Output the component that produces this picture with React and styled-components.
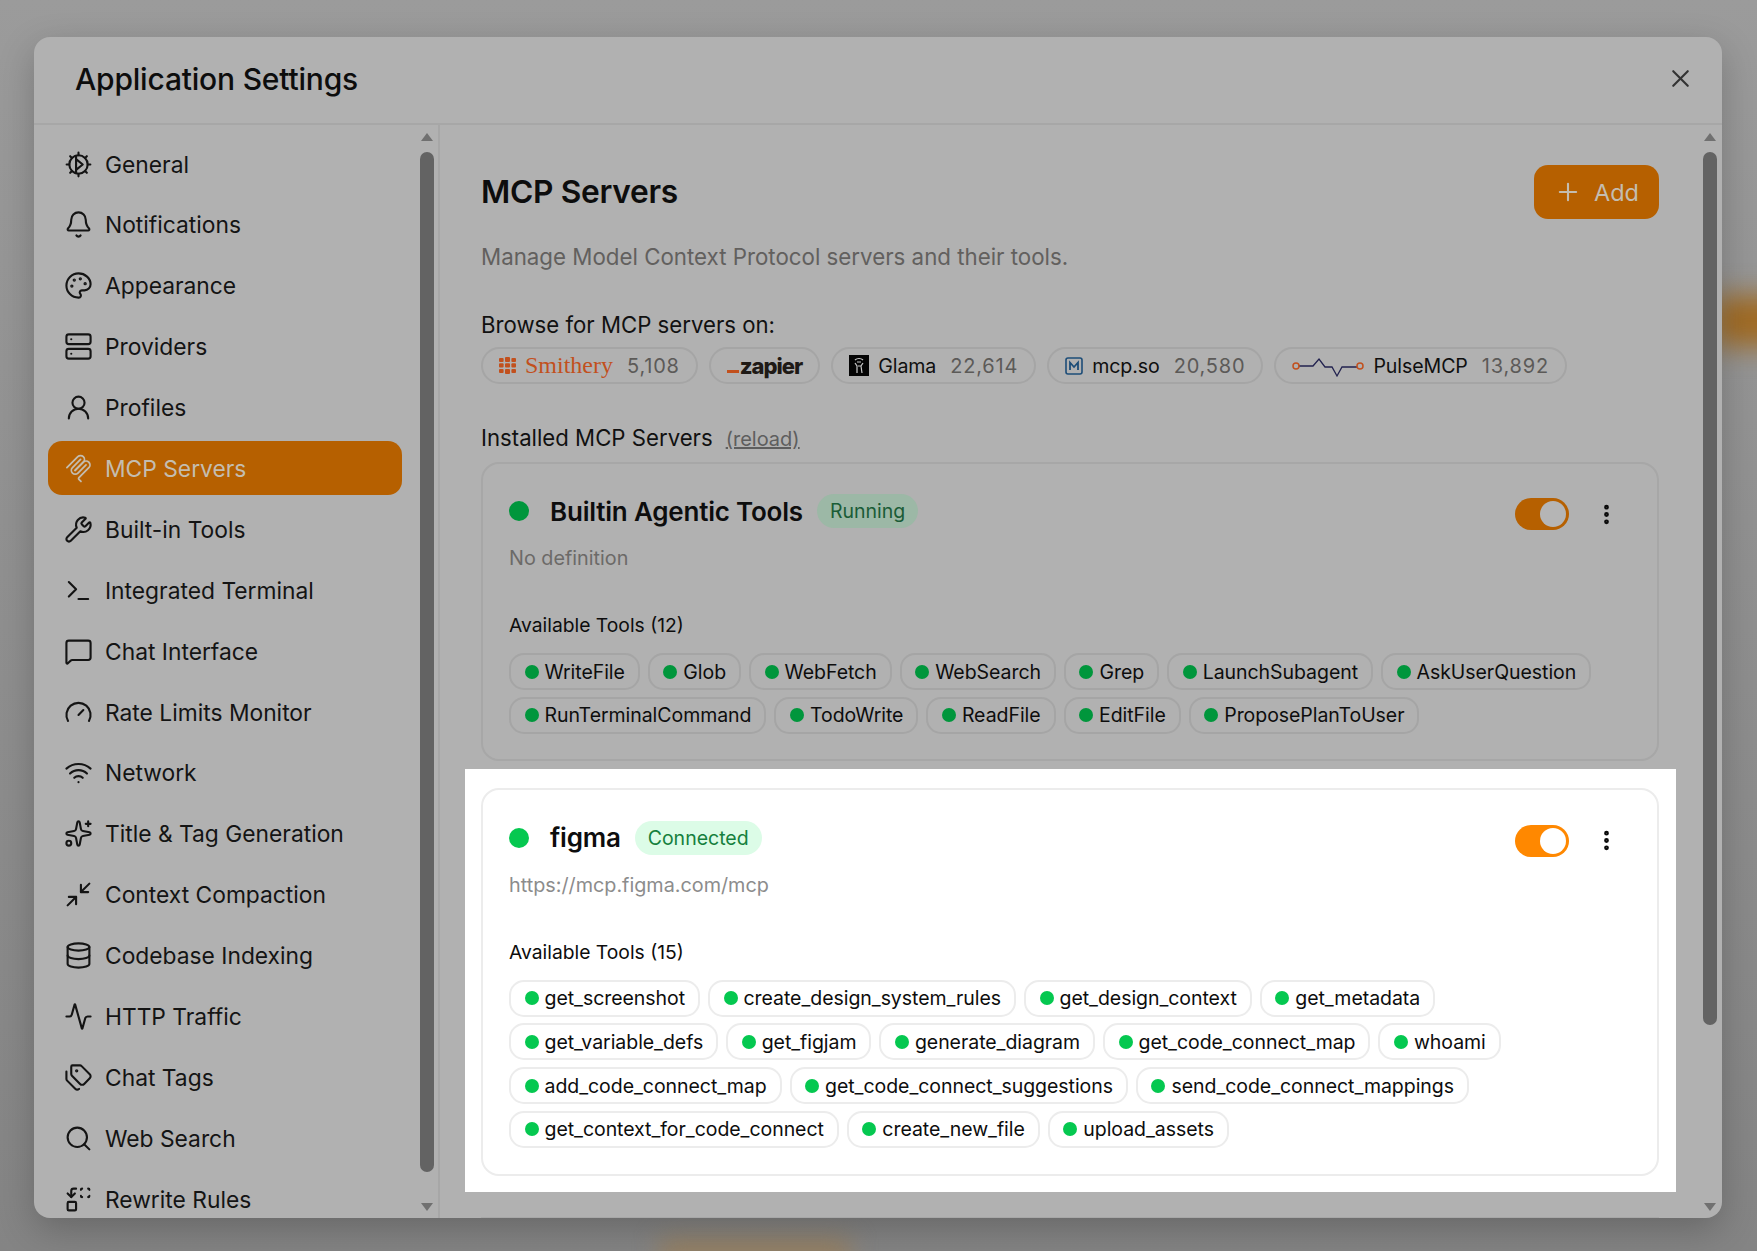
import React from 'react'
import styled, { createGlobalStyle } from 'styled-components'
import {
  Bell, Palette, Server, UserRound, Wrench, Terminal, MessageSquare, Gauge, Wifi,
  Sparkles, Minimize2, Database, Activity, Tags, Search, Replace, X, Plus, EllipsisVertical,
} from 'lucide-react'

const GlobalStyle = createGlobalStyle`
  html, body {
    margin: 0;
    padding: 0;
    background: #8f8f8f;
  }
  * {
    box-sizing: border-box;
  }
`

const GeneralIcon = ({ size }) => (
  <svg width={size} height={size} viewBox="0 0 24 24" fill="none" stroke="currentColor" strokeWidth="1.75" strokeLinecap="round" strokeLinejoin="round">
    <circle cx="12" cy="12" r="7.6" />
    <path d="M12 2.2v2.2M12 19.6v2.2M2.2 12h2.2M19.6 12h2.2M5.1 5.1l1.5 1.5M17.4 17.4l1.5 1.5M5.1 18.9l1.5-1.5M17.4 6.6l1.5-1.5" />
    <path d="M10 4.8v14.4M10 7.5l5.5 4.5L10 16.5" />
  </svg>
)

const McpIcon = ({ size }) => (
  <svg width={size} height={size} viewBox="0 0 180 180" fill="none" stroke="currentColor" strokeWidth="11" strokeLinecap="round">
    <path d="M18 84.85L85.88 16.97c9.37-9.37 24.57-9.37 33.94 0 9.37 9.37 9.37 24.57 0 33.94L68.56 102.18" />
    <path d="M69.27 101.47l50.55-50.56c9.37-9.37 24.57-9.37 33.94 0l.36.35c9.37 9.38 9.37 24.57 0 33.94L92.72 146.6c-3.12 3.12-3.12 8.19 0 11.31l12.61 12.61" />
    <path d="M102.85 33.94L52.65 84.15c-9.37 9.37-9.37 24.56 0 33.94 9.37 9.37 24.57 9.37 33.94 0l50.2-50.21" />
  </svg>
)

const navItems = [
  { label: 'General', icon: GeneralIcon },
  { label: 'Notifications', icon: Bell },
  { label: 'Appearance', icon: Palette },
  { label: 'Providers', icon: Server },
  { label: 'Profiles', icon: UserRound },
  { label: 'MCP Servers', icon: McpIcon, active: true },
  { label: 'Built-in Tools', icon: Wrench },
  { label: 'Integrated Terminal', icon: Terminal },
  { label: 'Chat Interface', icon: MessageSquare },
  { label: 'Rate Limits Monitor', icon: Gauge },
  { label: 'Network', icon: Wifi },
  { label: 'Title & Tag Generation', icon: Sparkles },
  { label: 'Context Compaction', icon: Minimize2 },
  { label: 'Codebase Indexing', icon: Database },
  { label: 'HTTP Traffic', icon: Activity },
  { label: 'Chat Tags', icon: Tags },
  { label: 'Web Search', icon: Search },
  { label: 'Rewrite Rules', icon: Replace },
]

const builtinTools = [
  'WriteFile', 'Glob', 'WebFetch', 'WebSearch', 'Grep', 'LaunchSubagent', 'AskUserQuestion',
  'RunTerminalCommand', 'TodoWrite', 'ReadFile', 'EditFile', 'ProposePlanToUser',
]

const figmaTools = [
  'get_screenshot', 'create_design_system_rules', 'get_design_context', 'get_metadata',
  'get_variable_defs', 'get_figjam', 'generate_diagram', 'get_code_connect_map', 'whoami',
  'add_code_connect_map', 'get_code_connect_suggestions', 'send_code_connect_mappings',
  'get_context_for_code_connect', 'create_new_file', 'upload_assets',
]

function ServerCard({ lit, name, badge, url, tools }) {
  return (
    <Card $lit={lit}>
      <CardHeader>
        <StatusDot $lit={lit} />
        <CardTitle>{name}</CardTitle>
        <Badge $lit={lit}>{badge}</Badge>
        <Actions>
          <Toggle $lit={lit}><Knob $lit={lit} /></Toggle>
          <EllipsisVertical size={25} strokeWidth={2.6} color="#0a0a0a" />
        </Actions>
      </CardHeader>
      <CardUrl $lit={lit}>{url}</CardUrl>
      <ToolsLabel>Available Tools ({tools.length})</ToolsLabel>
      <ToolList>
        {tools.map((tool) => (
          <ToolChip key={tool} $lit={lit}>
            <ToolDot $lit={lit} />
            {tool}
          </ToolChip>
        ))}
      </ToolList>
    </Card>
  )
}

export default function App() {
  return (
    <>
      <GlobalStyle />
      <Page>
        <BlurOrange />
        <BlurBottom />
        <Modal>
          <ModalHeader>
            <ModalTitle>Application Settings</ModalTitle>
            <CloseButton><X size={29} strokeWidth={1.8} /></CloseButton>
          </ModalHeader>
          <ModalBody>
            <Sidebar>
              <Nav>
                {navItems.map(({ label, icon: Icon, active }) => (
                  <NavItem key={label} $active={active}>
                    <Icon size={29} strokeWidth={1.75} />
                    {label}
                  </NavItem>
                ))}
              </Nav>
              <ScrollTrack $width={23}>
                <ArrowUp />
                <Thumb />
                <ArrowDown />
              </ScrollTrack>
            </Sidebar>
            <Main>
              <Content>
                <TitleRow>
                  <PageTitle>MCP Servers</PageTitle>
                  <AddButton><Plus size={28} strokeWidth={1.8} />Add</AddButton>
                </TitleRow>
                <Description>Manage Model Context Protocol servers and their tools.</Description>
                <SectionLabel $top={38}>Browse for MCP servers on:</SectionLabel>
                <DirectoryRow>
                  <DirectoryChip>
                    <svg width="17" height="17" viewBox="0 0 17 17" fill="#c2501d">
                      <rect x="0" y="1" width="4.6" height="4" rx="1" />
                      <rect x="6" y="0" width="5" height="5" rx="1" />
                      <rect x="12.4" y="1" width="4.6" height="4" rx="1" />
                      <rect x="0" y="6.2" width="4.6" height="4.4" rx="1" />
                      <rect x="6" y="6.2" width="5" height="4.4" rx="1" />
                      <rect x="12.4" y="6.2" width="4.6" height="4.4" rx="1" />
                      <rect x="0" y="12" width="4.6" height="4" rx="1" />
                      <rect x="6" y="12" width="5" height="5" rx="1" />
                      <rect x="12.4" y="12" width="4.6" height="4" rx="1" />
                    </svg>
                    <SmitheryName>Smithery</SmitheryName>
                    <ChipCount>5,108</ChipCount>
                  </DirectoryChip>
                  <DirectoryChip>
                    <ZapierName><ZapierMark />zapier</ZapierName>
                  </DirectoryChip>
                  <DirectoryChip>
                    <svg width="20" height="21" viewBox="0 0 20 21">
                      <rect width="20" height="21" fill="#050505" />
                      <path d="M6 5c2-2 6-2 8 0M6 8l2 3v7M14 8l-2 3 1 7M8 7h4M9 11h3" stroke="#c9c9c9" strokeWidth="1.2" fill="none" />
                    </svg>
                    <ChipName>Glama</ChipName>
                    <ChipCount>22,614</ChipCount>
                  </DirectoryChip>
                  <DirectoryChip>
                    <svg width="18" height="18" viewBox="0 0 18 18" fill="none">
                      <rect x="1" y="1" width="16" height="16" rx="2" stroke="#1d4d78" strokeWidth="1.6" />
                      <path d="M5 13V5.5L9 10l4-4.5V13" stroke="#1d4d78" strokeWidth="1.8" />
                    </svg>
                    <ChipName>mcp.so</ChipName>
                    <ChipCount>20,580</ChipCount>
                  </DirectoryChip>
                  <DirectoryChip>
                    <svg width="72" height="24" viewBox="0 0 72 24" fill="none">
                      <path d="M7 12h14l6-7 6 8h7l5 9 5-9h17" stroke="#22224f" strokeWidth="1.3" />
                      <circle cx="4" cy="12" r="3" fill="#b1b1b1" stroke="#c2501d" strokeWidth="1.5" />
                      <circle cx="68" cy="12" r="3" fill="#b1b1b1" stroke="#c2501d" strokeWidth="1.5" />
                    </svg>
                    <ChipName>PulseMCP</ChipName>
                    <ChipCount>13,892</ChipCount>
                  </DirectoryChip>
                </DirectoryRow>
                <SectionLabel $top={39}>
                  Installed MCP Servers
                  <ReloadLink>(reload)</ReloadLink>
                </SectionLabel>
                <CardStack>
                  <ServerCard name="Builtin Agentic Tools" badge="Running" url="No definition" tools={builtinTools} />
                  <Spotlight>
                    <ServerCard lit name="figma" badge="Connected" url="https://mcp.figma.com/mcp" tools={figmaTools} />
                  </Spotlight>
                  <NextCard />
                </CardStack>
              </Content>
              <ScrollTrack $width={24}>
                <ArrowUp />
                <Thumb $height={873} />
                <ThumbGap />
                <ArrowDown />
              </ScrollTrack>
            </Main>
          </ModalBody>
        </Modal>
      </Page>
    </>
  )
}

const Page = styled.div`
  position: relative;
  width: 1757px;
  height: 1251px;
  padding: 37px 35px 33px 34px;
  overflow: hidden;
  background: linear-gradient(180deg, #9b9b9b 0%, #8f8f8f 50%, #848484 100%);
  font-family: Inter, "Noto Sans", sans-serif;
  color: #0d0d0d;
`

const BlurOrange = styled.div`
  position: absolute;
  top: 296px;
  right: -40px;
  width: 84px;
  height: 50px;
  background: #a06a22;
  filter: blur(14px);
`

const BlurBottom = styled.div`
  position: absolute;
  left: 660px;
  bottom: -16px;
  width: 190px;
  height: 28px;
  background: #97805f;
  filter: blur(12px);
`

const Modal = styled.div`
  position: relative;
  display: flex;
  flex-direction: column;
  width: 1688px;
  height: 1181px;
  background: #b1b1b1;
  border-radius: 16px;
  overflow: hidden;
  box-shadow: 0 12px 36px rgba(0, 0, 0, 0.22);
`

const ModalHeader = styled.header`
  display: flex;
  align-items: center;
  justify-content: space-between;
  flex: none;
  height: 88px;
  padding: 0 27px 3px 41px;
  border-bottom: 2px solid #a7a7a7;
`

const ModalTitle = styled.h1`
  margin: 0;
  font-size: 30px;
  font-weight: 500;
  letter-spacing: -0.2px;
`

const CloseButton = styled.div`
  display: flex;
  color: #333;
`

const ModalBody = styled.div`
  display: flex;
  flex: 1;
  min-height: 0;
`

const Sidebar = styled.aside`
  display: flex;
  flex: none;
  width: 406px;
  border-right: 2px solid #a7a7a7;
`

const Nav = styled.nav`
  display: flex;
  flex-direction: column;
  flex: 1;
  gap: 6.9px;
  padding: 12px 13px 0 14px;
  overflow: hidden;
`

const NavItem = styled.div`
  display: flex;
  align-items: center;
  flex: none;
  gap: 12px;
  height: 54px;
  padding-left: 16px;
  border-radius: 14px;
  font-size: 22.8px;
  background: ${(p) => (p.$active ? '#b66000' : 'transparent')};
  color: ${(p) => (p.$active ? '#c4bdb0' : '#141414')};
`

const ScrollTrack = styled.div`
  display: flex;
  flex-direction: column;
  align-items: center;
  flex: none;
  width: ${(p) => p.$width}px;
  height: 100%;
  padding: 8px 0 7px;
`

const ArrowUp = styled.div`
  flex: none;
  width: 0;
  height: 0;
  margin-bottom: 11px;
  border: 6.5px solid transparent;
  border-top: none;
  border-bottom: 8px solid #707070;
`

const ArrowDown = styled.div`
  flex: none;
  width: 0;
  height: 0;
  margin-top: auto;
  border: 6.5px solid transparent;
  border-bottom: none;
  border-top: 8px solid #707070;
`

const Thumb = styled.div`
  flex: none;
  width: 14px;
  height: ${(p) => p.$height || 1020}px;
  background: #636363;
  border-radius: 7px;
`

const ThumbGap = styled.div`
  flex: 1;
`

const Main = styled.main`
  display: flex;
  flex: 1;
  min-width: 0;
`

const Content = styled.div`
  flex: 1;
  min-width: 0;
  padding: 40px 39px 0 41px;
  overflow: hidden;
`

const TitleRow = styled.div`
  display: flex;
  align-items: center;
  justify-content: space-between;
`

const PageTitle = styled.h2`
  margin: 0 0 2px;
  font-size: 31.7px;
  font-weight: 600;
  letter-spacing: -0.3px;
`

const AddButton = styled.div`
  display: flex;
  align-items: center;
  justify-content: center;
  gap: 12px;
  width: 125px;
  height: 54px;
  border-radius: 14px;
  background: #b66000;
  color: #c4bdb0;
  font-size: 23.5px;
`

const Description = styled.p`
  margin: 23px 0 0;
  font-size: 22.3px;
  line-height: 30px;
  color: #62605e;
`

const SectionLabel = styled.div`
  margin-top: ${(p) => p.$top}px;
  font-size: 22.2px;
  line-height: 30px;
  color: #111;
`

const ReloadLink = styled.span`
  margin-left: 13px;
  font-size: 20px;
  color: #5e5e5e;
  text-decoration: underline;
`

const DirectoryRow = styled.div`
  display: flex;
  gap: 11px;
  margin-top: 7px;
`

const DirectoryChip = styled.div`
  display: flex;
  align-items: center;
  height: 37px;
  padding: 0 16px;
  gap: 9px;
  border: 2px solid #a5a5a5;
  border-radius: 19px;
  font-size: 20px;
`

const SmitheryName = styled.span`
  font-family: "Liberation Serif", serif;
  font-size: 24px;
  color: #c2501d;
`

const ZapierName = styled.span`
  display: flex;
  align-items: flex-end;
  font-size: 22px;
  font-weight: 800;
  letter-spacing: -1px;
  color: #1f1a16;
`

const ZapierMark = styled.span`
  width: 12px;
  height: 3px;
  margin: 0 1px 6px 0;
  background: #c2501d;
`

const ChipName = styled.span`
  font-size: 19.6px;
  letter-spacing: -0.1px;
  color: #0f0f0f;
`

const ChipCount = styled.span`
  margin-left: 5px;
  color: #5c5a58;
  letter-spacing: 0.8px;
`

const CardStack = styled.div`
  display: flex;
  flex-direction: column;
  margin-top: 8px;
`

const Card = styled.section`
  padding: ${(p) => (p.$lit ? '31px 26px 26px' : '30px 26px 25px')};
  border: 2px solid ${(p) => (p.$lit ? '#ececec' : '#a7a7a7')};
  border-radius: 18px;
  background: ${(p) => (p.$lit ? '#ffffff' : 'transparent')};
`

const Spotlight = styled.div`
  margin: 8px -17px 0 -16px;
  padding: 19px 17px 16px 16px;
  background: #ffffff;
`

const NextCard = styled.div`
  height: 40px;
  margin-top: 25px;
  border-top: 2px solid #a7a7a7;
`

const CardHeader = styled.div`
  display: flex;
  align-items: center;
  height: 34px;
`

const StatusDot = styled.span`
  flex: none;
  width: 20px;
  height: 20px;
  margin-right: 21px;
  border-radius: 50%;
  background: ${(p) => (p.$lit ? '#05c850' : '#00963c')};
`

const CardTitle = styled.h3`
  margin: 0;
  font-size: 26px;
  font-weight: 600;
  letter-spacing: -0.2px;
`

const Badge = styled.span`
  display: flex;
  align-items: center;
  height: 34px;
  margin-left: 14px;
  padding: 0 13px;
  border-radius: 17px;
  font-size: 19.5px;
  background: ${(p) => (p.$lit ? '#dcfce7' : '#9cb8a6')};
  color: ${(p) => (p.$lit ? '#15803d' : '#1a5c36')};
`

const Actions = styled.div`
  display: flex;
  align-items: center;
  gap: 25px;
  margin: 3px 12px -3px auto;
`

const Toggle = styled.div`
  display: flex;
  align-items: center;
  justify-content: flex-end;
  width: 54px;
  height: 32px;
  padding-right: 3px;
  border-radius: 16px;
  background: ${(p) => (p.$lit ? '#ff8800' : '#b66000')};
`

const Knob = styled.span`
  width: 26px;
  height: 26px;
  border-radius: 50%;
  background: ${(p) => (p.$lit ? '#ffffff' : '#b5b5b5')};
`

const CardUrl = styled.div`
  margin-top: 16px;
  font-size: 19.8px;
  line-height: 28px;
  color: ${(p) => (p.$lit ? '#8c8c8c' : '#6c6a68')};
`

const ToolsLabel = styled.div`
  margin-top: 39px;
  font-size: 19.3px;
  line-height: 28px;
`

const ToolList = styled.div`
  display: flex;
  flex-wrap: wrap;
  gap: 6.7px 8px;
  margin-top: 14px;
`

const ToolChip = styled.div`
  display: flex;
  align-items: center;
  gap: 6px;
  height: 37px;
  padding: 0 13px 0 13.5px;
  border: 2px solid ${(p) => (p.$lit ? '#ececec' : '#a5a5a5')};
  border-radius: 15px;
  font-size: 19.5px;
  letter-spacing: -0.05px;
`

const ToolDot = styled.span`
  flex: none;
  width: 14px;
  height: 14px;
  border-radius: 50%;
  background: ${(p) => (p.$lit ? '#05c850' : '#00963c')};
`
